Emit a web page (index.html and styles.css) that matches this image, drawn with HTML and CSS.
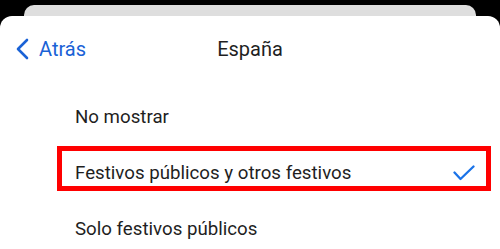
FILE: index.html
```html
<!DOCTYPE html>
<html lang="es">
<head>
    <meta charset="UTF-8">
    <meta name="viewport" content="width=device-width, initial-scale=1.0">
    <title>España</title>
    <link rel="stylesheet" href="styles.css">
</head>
<body>
    <!-- Hoja detrás -->
    <div class="back-card"></div>

    <!-- Hoja principal -->
    <div class="sheet">
        <div class="header">
            <a class="back" href="#">
                <svg class="chevron" width="14" height="22" viewBox="0 0 14 22">
                    <path d="M12 2 L3 11 L12 20" fill="none" stroke="#1a62d6" stroke-width="2.6" stroke-linecap="round" stroke-linejoin="round"/>
                </svg>
                <span>Atrás</span>
            </a>
            <h1 class="title">España</h1>
            <div></div>
        </div>

        <ul class="options">
            <li class="option">No mostrar</li>
            <li class="option selected">
                <span>Festivos públicos y otros festivos</span>
                <svg class="check" width="22" height="16" viewBox="0 0 22 16">
                    <path d="M1.5 7.5 L7.5 14 L20.5 1.5" fill="none" stroke="#1a73e8" stroke-width="2.3" stroke-linecap="round" stroke-linejoin="round"/>
                </svg>
            </li>
            <li class="option">Solo festivos públicos</li>
        </ul>
    </div>
</body>
</html>
```

FILE: styles.css
```css
/* Ajustes de festivos */
body {
    margin: 0;
    height: 249px;
    overflow: hidden;
    background-color: #000000;
    font-family: 'Roboto', 'Liberation Sans', sans-serif;
    color: #1f1f1f;
}

.back-card {
    margin: 5px 24px 0;
    height: 11px;
    background-color: #dedede;
    border-radius: 10px 10px 0 0;
}

.sheet {
    background-color: #ffffff;
    border-radius: 12px 12px 0 0;
    height: 240px;
}

.header {
    display: grid;
    grid-template-columns: 1fr auto 1fr;
    align-items: center;
    height: 50px;
}

.back {
    display: flex;
    align-items: center;
    gap: 10px;
    padding-left: 15px;
    color: #1a62d6;
    text-decoration: none;
    font-size: 20px;
    margin-top: 15px;
}

.title {
    margin: 15px 0 0;
    font-size: 20px;
    font-weight: 400;
    color: #1f1f1f;
}

.options {
    list-style: none;
    margin: 24px 9px 0 57px;
    padding: 0;
}

.option {
    box-sizing: border-box;
    display: flex;
    align-items: flex-start;
    justify-content: space-between;
    height: 45px;
    margin-bottom: 11px;
    padding: 11px 11px 0 13px;
    border: 5px solid transparent;
    font-size: 18.7px;
    line-height: 22px;
}

.option.selected {
    border-color: #ff0000;
}

.check {
    margin-top: 3px;
}
```
